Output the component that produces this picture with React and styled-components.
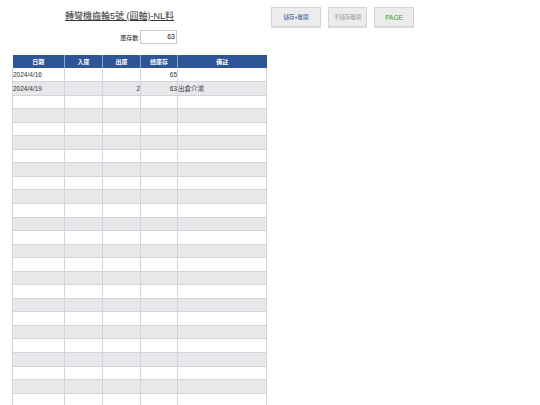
import React from "react";
import styled, { createGlobalStyle } from "styled-components";

const Global = createGlobalStyle`
  html, body { margin: 0; padding: 0; background: #fff; overflow: hidden; }
  body { font-family: "Liberation Sans", "Noto Sans CJK TC", sans-serif; color: #222; }
`;

const Page = styled.div`
  display: flex;
  align-items: flex-start;
  width: 540px;
  height: 405px;
  overflow: hidden;
`;

const LeftPane = styled.div`
  display: flex;
  flex-direction: column;
  padding-left: 12px;
  width: 254px;
`;

const Title = styled.div`
  margin-top: 10px;
  padding-left: 53px;
  font-size: 9px;
  line-height: 12px;
  height: 12px;
  color: #333;
  text-decoration: underline;
  white-space: nowrap;
`;

const StockRow = styled.div`
  display: flex;
  align-items: center;
  margin-top: 8px;
  padding-left: 105px;
  height: 14px;
`;

const StockLabel = styled.span`
  font-size: 6px;
  color: #222;
  width: 23px;
  text-align: right;
  white-space: nowrap;
`;

const StockBox = styled.div`
  width: 37px;
  height: 14px;
  border: 1px solid #c8c8d0;
  font-size: 7px;
  line-height: 12px;
  text-align: right;
  padding-right: 1px;
  box-sizing: border-box;
`;

const Table = styled.table`
  margin-top: 11px;
  border-collapse: collapse;
  table-layout: fixed;
  width: 254px;
  font-size: 6.5px;
`;

const Th = styled.th`
  background: #2e5597;
  color: #fff;
  font-weight: bold;
  font-size: 6px;
  height: 13px;
  padding: 0;
  border-right: 1px solid #8ea3c8;
  text-align: center;
  &:last-child { border-right: none; }
`;

const Tr = styled.tr`
  height: 13.55px;
  background: ${(p) => (p.$shade ? "#e8e8ea" : "#fff")};
`;

const Td = styled.td`
  padding: 0;
  border: 1px solid #d4d4dc;
  border-top: none;
  text-align: ${(p) => (p.$right ? "right" : "left")};
  white-space: nowrap;
  overflow: hidden;
  color: #333;
`;

const Buttons = styled.div`
  display: flex;
  gap: 7px;
  margin-top: 7px;
  margin-left: 5px;
`;

const Btn = styled.button`
  height: 20px;
  width: ${(p) => p.$w}px;
  padding: 0;
  background: #ececec;
  border: 1px solid #d4d4d4;
  box-shadow: 0 1px 0 #dcdcdc;
  color: ${(p) => p.$color};
  font-size: ${(p) => p.$fs || 5.5}px;
  font-family: "Liberation Sans", "Noto Sans CJK TC", sans-serif;
`;

const data = [
  ["2024/4/16", "", "", "65", ""],
  ["2024/4/19", "", "2", "63", "出倉介鴻"],
];

const rows = Array.from({ length: 26 }, (_, i) => data[i] || ["", "", "", "", ""]);

export default function App() {
  return (
    <Page>
      <Global />
      <LeftPane>
        <Title>轉彎機齒輪5號 (圓軸)-NL料</Title>
        <StockRow>
          <StockLabel>庫存數:</StockLabel>
          <StockBox>63</StockBox>
        </StockRow>
        <Table>
          <colgroup>
            <col style={{ width: 52 }} />
            <col style={{ width: 38 }} />
            <col style={{ width: 38 }} />
            <col style={{ width: 37 }} />
            <col style={{ width: 89 }} />
          </colgroup>
          <thead>
            <tr>
              <Th>日期</Th>
              <Th>入庫</Th>
              <Th>出庫</Th>
              <Th>總庫存</Th>
              <Th>備註</Th>
            </tr>
          </thead>
          <tbody>
            {rows.map((r, i) => (
              <Tr key={i} $shade={i % 2 === 1}>
                <Td>{r[0]}</Td>
                <Td $right>{r[1]}</Td>
                <Td $right>{r[2]}</Td>
                <Td $right>{r[3]}</Td>
                <Td>{r[4]}</Td>
              </Tr>
            ))}
          </tbody>
        </Table>
      </LeftPane>
      <Buttons>
        <Btn $w={50} $color="#2e5597">儲存+離開</Btn>
        <Btn $w={39} $color="#999">不儲存離開</Btn>
        <Btn $w={40} $color="#3a9a3a" $fs={6.5}>PAGE</Btn>
      </Buttons>
    </Page>
  );
}
